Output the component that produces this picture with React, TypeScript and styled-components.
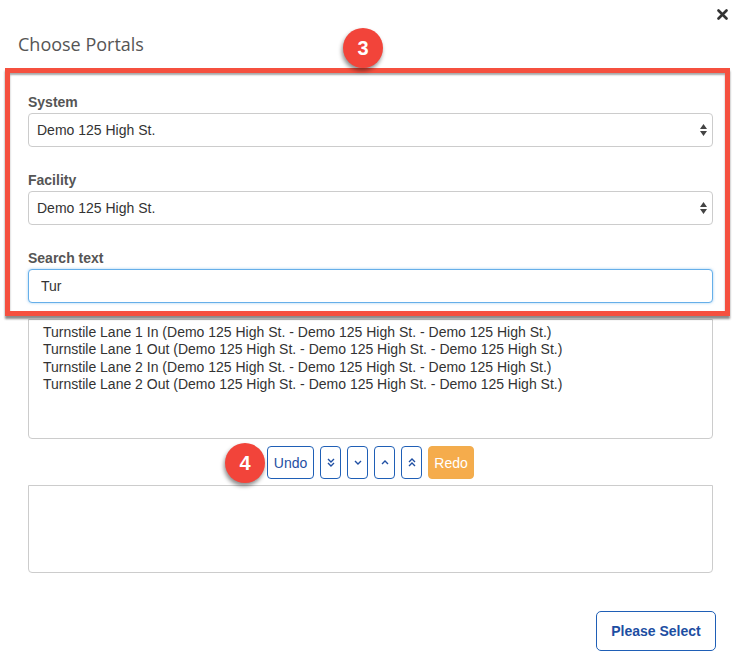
import React from "react";
import styled, { createGlobalStyle } from "styled-components";

const GlobalStyle = createGlobalStyle`
  html, body { margin: 0; padding: 0; background: #fff; }
  body {
    font-family: "Liberation Sans", Arial, sans-serif;
    font-size: 14px;
    color: #333;
  }
  * { box-sizing: border-box; }
`;

const Modal = styled.div`
  width: 750px;
  height: 658px;
  background: #fff;
  display: flex;
  flex-direction: column;
`;

const Header = styled.div`
  display: flex;
  flex-direction: column;
  padding: 9px 22px 0 18px;
`;

const CloseButton = styled.button`
  align-self: flex-end;
  width: 11px;
  height: 11px;
  padding: 0;
  border: 0;
  background: none;
  display: flex;
  cursor: pointer;
`;

const Title = styled.h4`
  margin: 12px 0 0;
  font-family: "Open Sans", "Liberation Sans", sans-serif;
  font-weight: 400;
  font-size: 18px;
  line-height: 24px;
  color: #555;
`;

const Highlight = styled.div`
  position: relative;
  margin: 12px 20px 0 5px;
  padding: 19px 12px 8px 18px;
  border: 5px solid #f5503f;
  box-shadow: 0 3px 2px rgba(0, 0, 0, 0.45), inset 0 2px 2px rgba(0, 0, 0, 0.35);
`;

const Badge = styled.div<{ $left: number; $top: number }>`
  position: absolute;
  left: ${(p) => p.$left}px;
  top: ${(p) => p.$top}px;
  width: 40px;
  height: 40px;
  border-radius: 50%;
  background: #f2443a;
  color: #fff;
  font-weight: 700;
  font-size: 20px;
  display: flex;
  align-items: center;
  justify-content: center;
  box-shadow: -1px 3px 4px rgba(0, 0, 0, 0.45);
`;

const FormGroup = styled.div<{ $last?: boolean }>`
  display: flex;
  flex-direction: column;
  margin-bottom: ${(p) => (p.$last ? 0 : 23)}px;
`;

const Label = styled.label`
  font-weight: 700;
  font-size: 14px;
  line-height: 20px;
  color: #555;
  margin-bottom: 1px;
`;

const SelectWrap = styled.div`
  position: relative;
  display: flex;
`;

const Select = styled.select`
  appearance: none;
  width: 100%;
  height: 34px;
  padding: 0 24px 0 8px;
  border: 1px solid #ccc;
  border-radius: 4px;
  background: #fff;
  font-family: "Liberation Sans", Arial, sans-serif;
  font-size: 14px;
  color: #333;
`;

const SelectArrow = styled.svg`
  position: absolute;
  right: 6px;
  top: 11px;
  pointer-events: none;
`;

const TextInput = styled.input`
  height: 34px;
  padding: 0 12px;
  border: 1px solid #66afe9;
  border-radius: 4px;
  outline: none;
  box-shadow: 0 0 3px rgba(102, 175, 233, 0.6);
  font-family: "Liberation Sans", Arial, sans-serif;
  font-size: 14px;
  color: #333;
`;

const Body = styled.div`
  display: flex;
  flex-direction: column;
  padding: 0 37px 0 28px;
`;

const ListBox = styled.div<{ $height: number; $top: number }>`
  height: ${(p) => p.$height}px;
  margin-top: ${(p) => p.$top}px;
  border: 1px solid #ccc;
  border-radius: 0 0 4px 4px;
  padding: 4px 14px;
  display: flex;
  flex-direction: column;
`;

const ListItem = styled.div`
  font-size: 14px;
  line-height: 17.3px;
  color: #333;
  white-space: nowrap;
`;

const ButtonRow = styled.div`
  display: flex;
  justify-content: center;
  margin-top: 7px;
`;

const ButtonGroup = styled.div`
  position: relative;
  display: flex;
  gap: 6px;
`;

const ToolButton = styled.button<{ $width: number; $warning?: boolean }>`
  height: 33px;
  width: ${(p) => p.$width}px;
  padding: 0;
  border: 1px solid ${(p) => (p.$warning ? "#f0ad4e" : "#1f5fb6")};
  border-radius: 4px;
  background: ${(p) => (p.$warning ? "#f5ac4c" : "#fff")};
  color: ${(p) => (p.$warning ? "#fff" : "#1f4fa3")};
  font-family: "Liberation Sans", Arial, sans-serif;
  font-size: 14px;
  display: flex;
  align-items: center;
  justify-content: center;
  cursor: pointer;
`;

const Footer = styled.div`
  display: flex;
  justify-content: flex-end;
  padding: 38px 34px 0 0;
`;

const PrimaryButton = styled.button`
  width: 120px;
  height: 40px;
  border: 1px solid #1f5fb6;
  border-radius: 5px;
  background: #fff;
  color: #1d4ea2;
  font-family: "Liberation Sans", Arial, sans-serif;
  font-weight: 700;
  font-size: 14px;
  cursor: pointer;
`;

const Chevron = ({ dir, double }: { dir: "up" | "down"; double?: boolean }) => {
  const d = dir === "down" ? "M1 1 L4 4 L7 1" : "M1 4 L4 1 L7 4";
  return (
    <svg width="8" height={double ? 9 : 5} viewBox={`0 0 8 ${double ? 9 : 5}`}>
      <path d={d} fill="none" stroke="#1f4fa3" strokeWidth="1.4" />
      {double && (
        <path d={d} transform="translate(0 4)" fill="none" stroke="#1f4fa3" strokeWidth="1.4" />
      )}
    </svg>
  );
};

const Arrows = () => (
  <SelectArrow width="7" height="12" viewBox="0 0 7 12">
    <path d="M3.5 0 L7 5 L0 5 Z M0 7 L7 7 L3.5 12 Z" fill="#444" />
  </SelectArrow>
);

const portals = [
  "Turnstile Lane 1 In",
  "Turnstile Lane 1 Out",
  "Turnstile Lane 2 In",
  "Turnstile Lane 2 Out",
];

const site = "Demo 125 High St.";

export default function App() {
  return (
    <Modal>
      <GlobalStyle />
      <Header>
        <CloseButton aria-label="Close">
          <svg width="11" height="11" viewBox="0 0 11 11">
            <path d="M1.5 1.5 L9.5 9.5 M9.5 1.5 L1.5 9.5" stroke="#333" strokeWidth="2.6" strokeLinecap="round" />
          </svg>
        </CloseButton>
        <Title>Choose Portals</Title>
      </Header>

      <Highlight>
        <Badge $left={333} $top={-45}>3</Badge>
        <FormGroup>
          <Label>System</Label>
          <SelectWrap>
            <Select defaultValue={site}>
              <option>{site}</option>
            </Select>
            <Arrows />
          </SelectWrap>
        </FormGroup>
        <FormGroup>
          <Label>Facility</Label>
          <SelectWrap>
            <Select defaultValue={site}>
              <option>{site}</option>
            </Select>
            <Arrows />
          </SelectWrap>
        </FormGroup>
        <FormGroup $last>
          <Label>Search text</Label>
          <TextInput defaultValue="Tur" />
        </FormGroup>
      </Highlight>

      <Body>
        <ListBox $height={120} $top={3}>
          {portals.map((p) => (
            <ListItem key={p}>
              {p} ({site} - {site} - {site})
            </ListItem>
          ))}
        </ListBox>

        <ButtonRow>
          <ButtonGroup>
            <Badge $left={-42} $top={-3}>4</Badge>
            <ToolButton $width={47}>Undo</ToolButton>
            <ToolButton $width={21}><Chevron dir="down" double /></ToolButton>
            <ToolButton $width={21}><Chevron dir="down" /></ToolButton>
            <ToolButton $width={21}><Chevron dir="up" /></ToolButton>
            <ToolButton $width={21}><Chevron dir="up" double /></ToolButton>
            <ToolButton $width={46} $warning>Redo</ToolButton>
          </ButtonGroup>
        </ButtonRow>

        <ListBox $height={88} $top={6} />
      </Body>

      <Footer>
        <PrimaryButton>Please Select</PrimaryButton>
      </Footer>
    </Modal>
  );
}
